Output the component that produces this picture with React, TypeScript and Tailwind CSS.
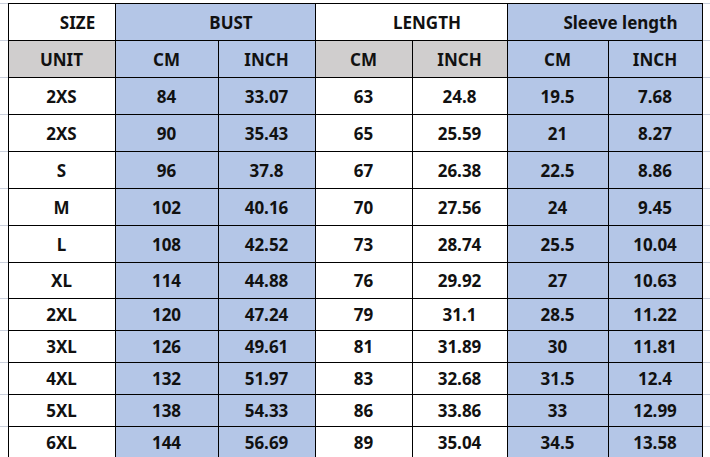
import React from "react";

const BLUE = "bg-[#b4c6e7]";
const GRAY = "bg-[#d0cece]";
const WHITE = "bg-white";

const rows: string[][] = [
  ["2XS", "84", "33.07", "63", "24.8", "19.5", "7.68"],
  ["2XS", "90", "35.43", "65", "25.59", "21", "8.27"],
  ["S", "96", "37.8", "67", "26.38", "22.5", "8.86"],
  ["M", "102", "40.16", "70", "27.56", "24", "9.45"],
  ["L", "108", "42.52", "73", "28.74", "25.5", "10.04"],
  ["XL", "114", "44.88", "76", "29.92", "27", "10.63"],
  ["2XL", "120", "47.24", "79", "31.1", "28.5", "11.22"],
  ["3XL", "126", "49.61", "81", "31.89", "30", "11.81"],
  ["4XL", "132", "51.97", "83", "32.68", "31.5", "12.4"],
  ["5XL", "138", "54.33", "86", "33.86", "33", "12.99"],
  ["6XL", "144", "56.69", "89", "35.04", "34.5", "13.58"],
];

const colBg = [WHITE, BLUE, BLUE, WHITE, WHITE, BLUE, BLUE];

const ROWS = "grid-rows-[36px_36px_36px_36px_36px_36px_36px_35px_31px_31px_31px_31px_31px]";
const COLS = "grid-cols-[106px_102px_96px_96px_94px_100px_93px]";

function Cell({ bg, children, className = "" }: { bg: string; children: React.ReactNode; className?: string }) {
  return (
    <div className={`${bg} flex items-center justify-center text-[17px] font-bold text-[#111] leading-none ${className}`}>
      {children}
    </div>
  );
}

function Gutter() {
  return (
    <div className={`grid ${ROWS} w-[8px] gap-px bg-[#c9cfdc] py-px`}>
      {Array.from({ length: 13 }).map((_, i) => (
        <div key={i} className="bg-white" />
      ))}
    </div>
  );
}

export default function App() {
  return (
    <div
      className="w-[710px] h-[457px] bg-white overflow-hidden"
      style={{ fontFamily: '"Noto Sans", "Open Sans", sans-serif' }}
    >
      <div className="h-[3px]" />
      <div className="flex">
        <Gutter />
        <div className={`grid ${COLS} ${ROWS} gap-px bg-black p-px`}>
          <Cell bg={WHITE} className="pl-[32px]">SIZE</Cell>
          <Cell bg={BLUE} className="col-span-2 pl-[32px]">BUST</Cell>
          <Cell bg={WHITE} className="col-span-2 pl-[32px]">LENGTH</Cell>
          <Cell bg={BLUE} className="col-span-2 pl-[32px]">Sleeve length</Cell>

          <Cell bg={GRAY}>UNIT</Cell>
          <Cell bg={BLUE}>CM</Cell>
          <Cell bg={BLUE}>INCH</Cell>
          <Cell bg={GRAY}>CM</Cell>
          <Cell bg={GRAY}>INCH</Cell>
          <Cell bg={BLUE}>CM</Cell>
          <Cell bg={BLUE}>INCH</Cell>

          {rows.map((r, i) =>
            r.map((v, j) => (
              <Cell key={`${i}-${j}`} bg={colBg[j]}>
                {v}
              </Cell>
            ))
          )}
        </div>
        <Gutter />
      </div>
      <div className="flex">
        <div className="w-[8px]" />
        <div className={`grid ${COLS} h-[3px] gap-px bg-[#d4d8e0] px-px`}>
          {Array.from({ length: 7 }).map((_, i) => (
            <div key={i} className="bg-white" />
          ))}
        </div>
      </div>
    </div>
  );
}
